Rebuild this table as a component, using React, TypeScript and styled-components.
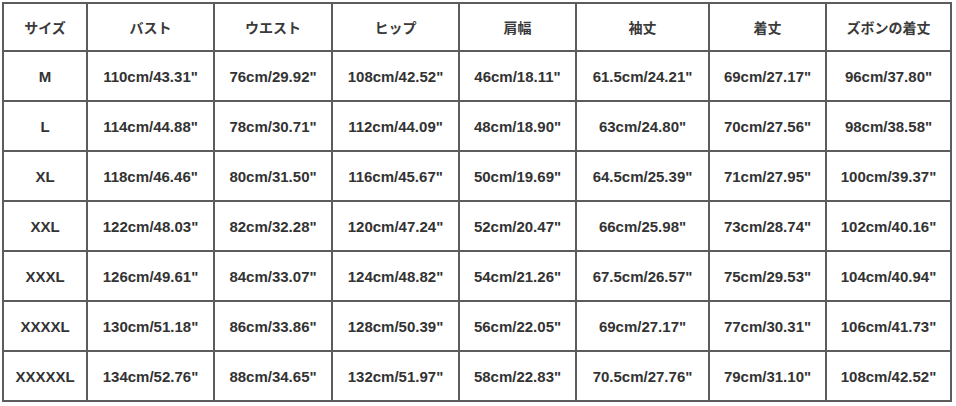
import React from "react";
import styled, { createGlobalStyle } from "styled-components";

const GlobalStyle = createGlobalStyle`
  html, body {
    margin: 0;
    padding: 0;
    background: #fff;
  }
`;

const headers = ["サイズ", "バスト", "ウエスト", "ヒップ", "肩幅", "袖丈", "着丈", "ズボンの着丈"];
const colWidths = [84, 127, 118, 127, 117, 133, 117, 125];

const rows: string[][] = [
  ["M", "110cm/43.31\"", "76cm/29.92\"", "108cm/42.52\"", "46cm/18.11\"", "61.5cm/24.21\"", "69cm/27.17\"", "96cm/37.80\""],
  ["L", "114cm/44.88\"", "78cm/30.71\"", "112cm/44.09\"", "48cm/18.90\"", "63cm/24.80\"", "70cm/27.56\"", "98cm/38.58\""],
  ["XL", "118cm/46.46\"", "80cm/31.50\"", "116cm/45.67\"", "50cm/19.69\"", "64.5cm/25.39\"", "71cm/27.95\"", "100cm/39.37\""],
  ["XXL", "122cm/48.03\"", "82cm/32.28\"", "120cm/47.24\"", "52cm/20.47\"", "66cm/25.98\"", "73cm/28.74\"", "102cm/40.16\""],
  ["XXXL", "126cm/49.61\"", "84cm/33.07\"", "124cm/48.82\"", "54cm/21.26\"", "67.5cm/26.57\"", "75cm/29.53\"", "104cm/40.94\""],
  ["XXXXL", "130cm/51.18\"", "86cm/33.86\"", "128cm/50.39\"", "56cm/22.05\"", "69cm/27.17\"", "77cm/30.31\"", "106cm/41.73\""],
  ["XXXXXL", "134cm/52.76\"", "88cm/34.65\"", "132cm/51.97\"", "58cm/22.83\"", "70.5cm/27.76\"", "79cm/31.10\"", "108cm/42.52\""],
];

export default function App() {
  return (
    <>
      <GlobalStyle />
      <Page>
        <SizeTable>
          <colgroup>
            {colWidths.map((w, i) => (
              <col key={i} style={{ width: w }} />
            ))}
          </colgroup>
          <thead>
            <tr>
              {headers.map((h) => (
                <HeadCell key={h}>{h}</HeadCell>
              ))}
            </tr>
          </thead>
          <tbody>
            {rows.map((r) => (
              <tr key={r[0]}>
                {r.map((v, i) => (
                  <Cell key={i}>{v}</Cell>
                ))}
              </tr>
            ))}
          </tbody>
        </SizeTable>
      </Page>
    </>
  );
}

const Page = styled.div`
  width: 956px;
  height: 406px;
  padding: 2px 0 0 2px;
  box-sizing: border-box;
  background: #fff;
`;

const SizeTable = styled.table`
  border-collapse: collapse;
  table-layout: fixed;
  width: 950px;
  color: #333;
  font-family: "Liberation Sans", Arial, "Noto Sans CJK JP", sans-serif;
`;

const Cell = styled.td`
  height: 48px;
  padding: 0;
  border: 2px solid #5c5c5c;
  text-align: center;
  vertical-align: middle;
  font-size: 15px;
  font-weight: 700;
  white-space: nowrap;
`;

const HeadCell = styled.th`
  height: 46px;
  padding: 0;
  border: 2px solid #5c5c5c;
  text-align: center;
  vertical-align: middle;
  font-family: "Noto Sans CJK JP", sans-serif;
  font-size: 14px;
  font-weight: 700;
  color: #3a3a3a;
  white-space: nowrap;
`;
